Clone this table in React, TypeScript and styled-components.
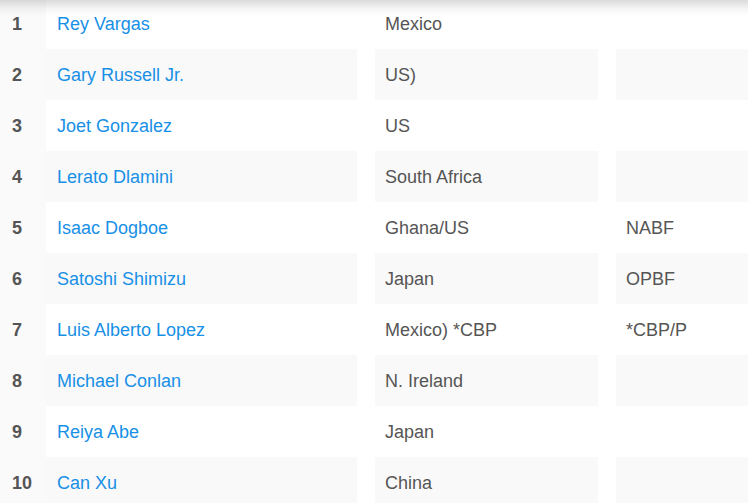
import styled, {createGlobalStyle} from 'styled-components'

const GlobalStyle = createGlobalStyle`
  html, body {
    margin: 0;
    padding: 0;
    background: #fff;
  }
  body {
    font-family: "Liberation Sans", Arial, sans-serif;
    overflow: hidden;
  }
`

type Boxer = {
  rank: number
  name: string
  country: string
  note?: string
}

const boxers: Boxer[] = [
  {rank: 1, name: 'Rey Vargas', country: 'Mexico'},
  {rank: 2, name: 'Gary Russell Jr.', country: 'US)'},
  {rank: 3, name: 'Joet Gonzalez', country: 'US'},
  {rank: 4, name: 'Lerato Dlamini', country: 'South Africa'},
  {rank: 5, name: 'Isaac Dogboe', country: 'Ghana/US', note: 'NABF'},
  {rank: 6, name: 'Satoshi Shimizu', country: 'Japan', note: 'OPBF'},
  {rank: 7, name: 'Luis Alberto Lopez', country: 'Mexico) *CBP', note: '*CBP/P'},
  {rank: 8, name: 'Michael Conlan', country: 'N. Ireland'},
  {rank: 9, name: 'Reiya Abe', country: 'Japan'},
  {rank: 10, name: 'Can Xu', country: 'China'},
]

const Page = styled.div`
  position: relative;
  width: 748px;
  height: 503px;
  overflow: hidden;

  /* soft shadow of the header sitting above the table */
  &::before {
    content: '';
    position: absolute;
    left: 0;
    right: 0;
    top: 0;
    height: 16px;
    background: linear-gradient(to bottom, rgba(0, 0, 0, 0.14), rgba(0, 0, 0, 0.04) 55%, rgba(0, 0, 0, 0));
    pointer-events: none;
    z-index: 2;
  }
`

const Table = styled.div`
  display: flex;
  flex-direction: column;
  margin-top: -2px;
  font-size: 18px;
  line-height: 20px;
`

const Row = styled.div<{$shaded: boolean}>`
  display: flex;
  height: 51px;
  --cell-bg: ${({$shaded}) => ($shaded ? '#f9f9f9' : '#ffffff')};
`

const Cell = styled.div<{$gap?: boolean}>`
  display: flex;
  flex-shrink: 0;
  align-items: center;
  padding-left: 10px;
  box-sizing: border-box;
  background: var(--cell-bg);
  margin-left: ${({$gap}) => ($gap ? '18px' : '0')};
  color: #555;
  white-space: nowrap;
`

const Rank = styled(Cell)`
  width: 46px;
  padding-left: 12px;
  background: #fafafa;
  font-weight: bold;
  color: #555;
`

const Name = styled(Cell)`
  width: 311px;
  padding-left: 11px;
`

const NameLink = styled.a`
  color: #1890e6;
  text-decoration: none;
`

const Country = styled(Cell)`
  width: 223px;
`

const Note = styled(Cell)`
  width: 160px;
`

export default function App() {
  return (
    <>
      <GlobalStyle />
      <Page>
        <Table>
          {boxers.map((b) => (
            <Row key={b.rank} $shaded={b.rank % 2 === 0}>
              <Rank>{b.rank}</Rank>
              <Name>
                <NameLink href="#">{b.name}</NameLink>
              </Name>
              <Country $gap>{b.country}</Country>
              <Note $gap>{b.note}</Note>
            </Row>
          ))}
        </Table>
      </Page>
    </>
  )
}
